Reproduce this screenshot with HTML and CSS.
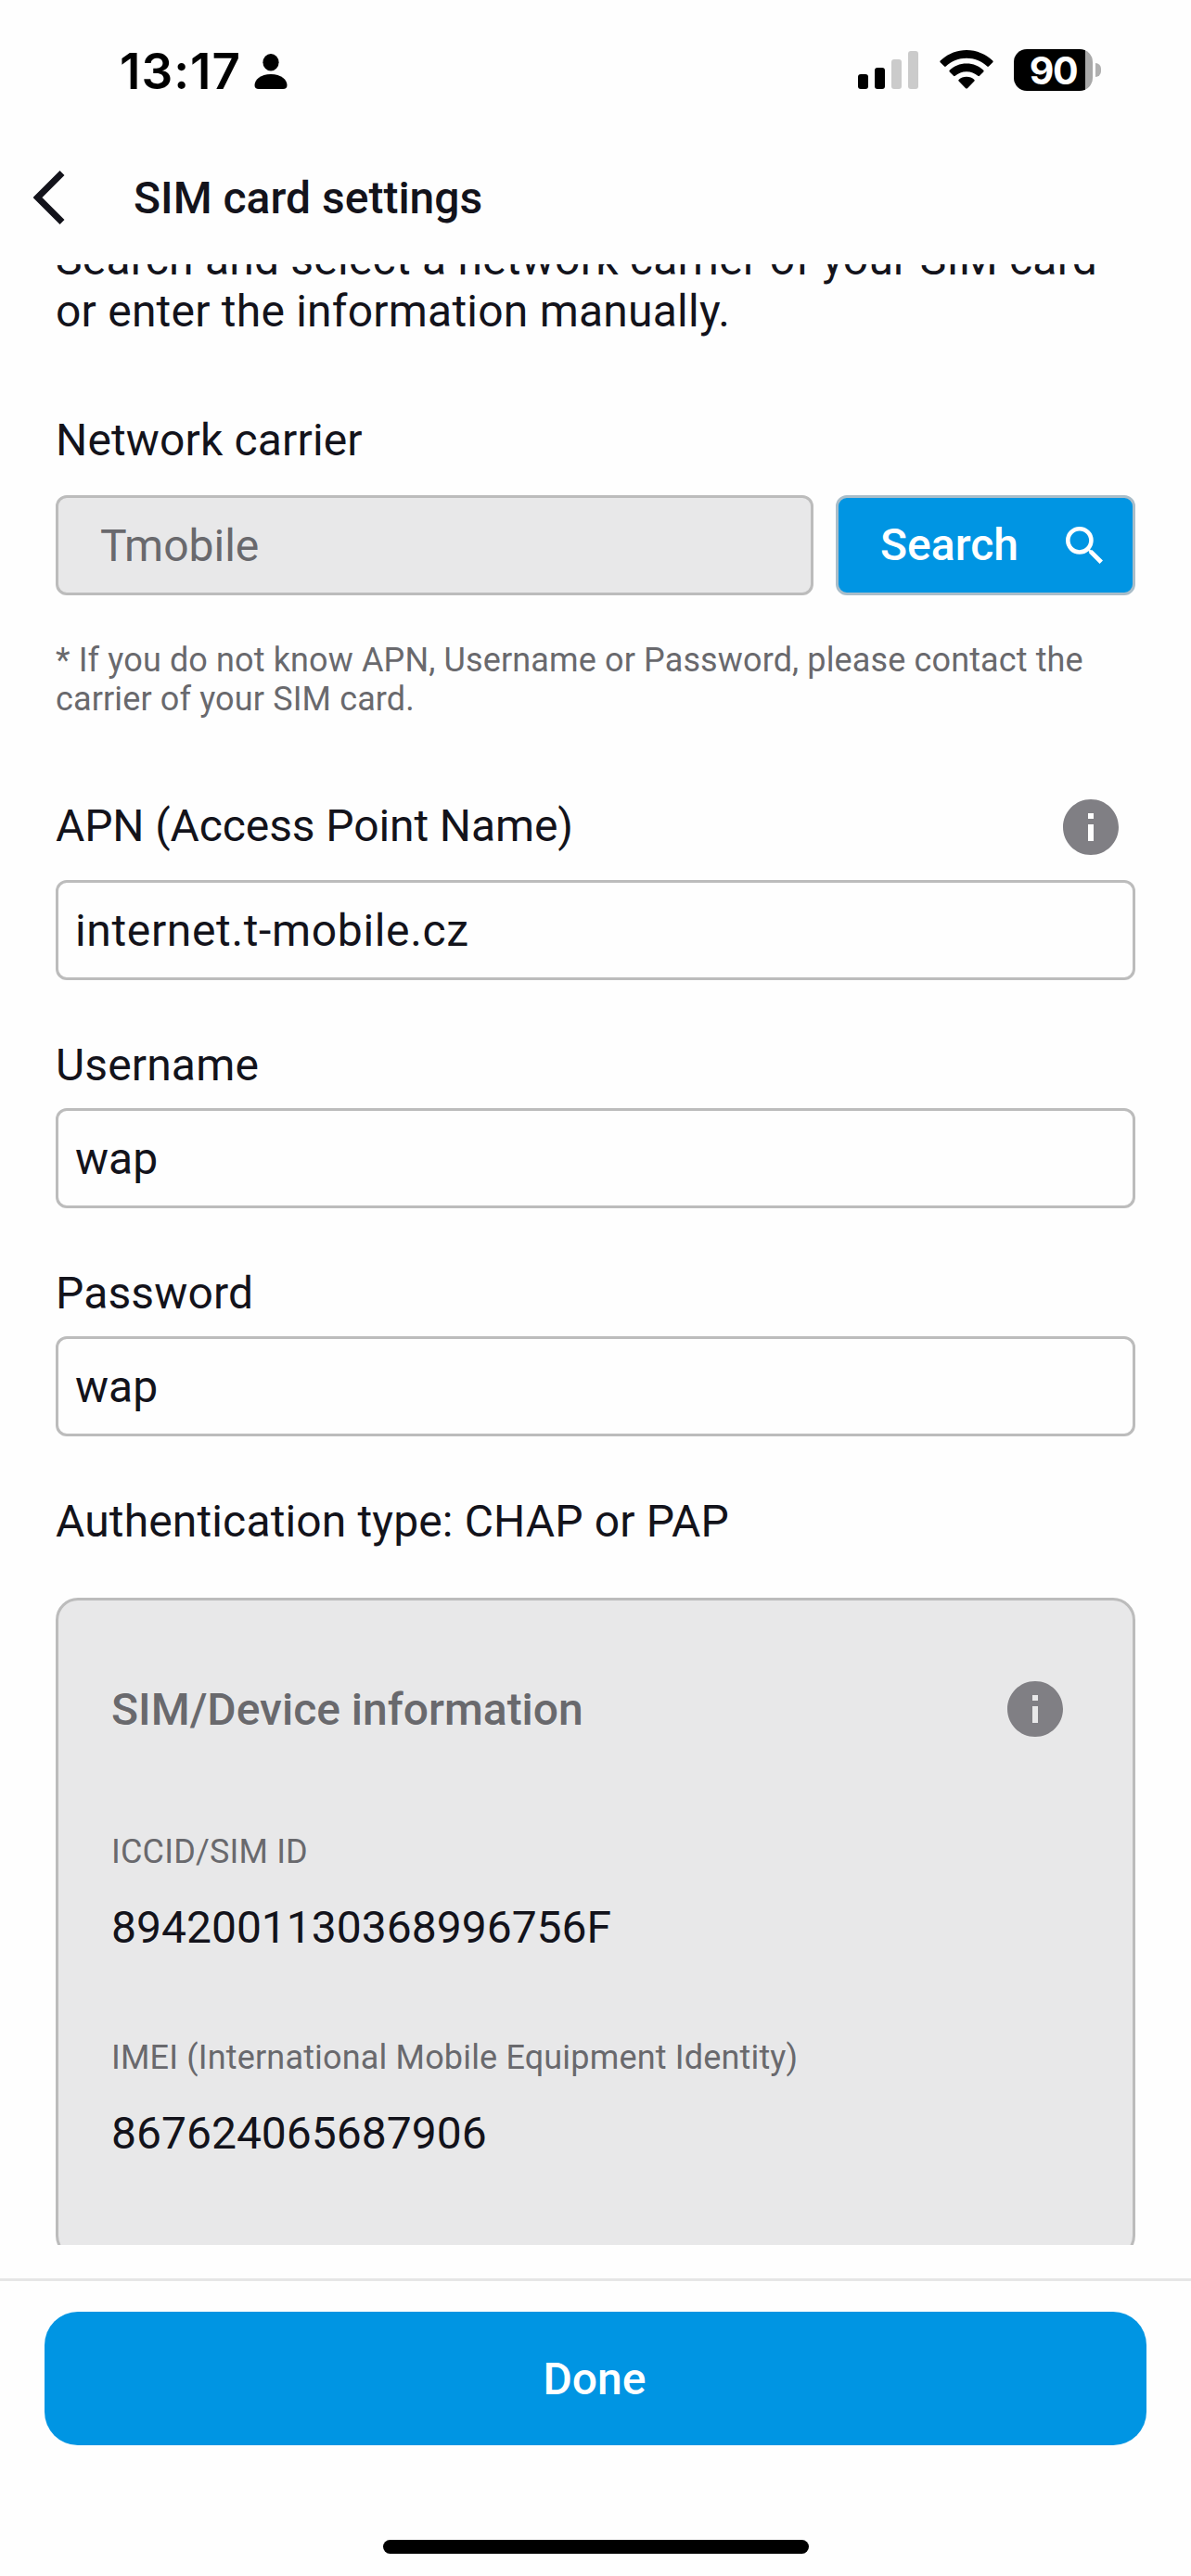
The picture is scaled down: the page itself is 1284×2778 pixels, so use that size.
FILE: index.html
```html
<!DOCTYPE html>
<html lang="en">

<head>
    <meta charset="UTF-8">
    <meta name="viewport" content="width=device-width, initial-scale=1.0">
    <title>SIM card settings</title>
    <link rel="stylesheet" href="styles.css">
</head>

<body>
    <div class="screen">
        <div class="status-bar">
            <div class="status-left">
                <span class="clock">13:17</span>
                <svg class="person-icon" viewBox="0 0 36 38">
                    <ellipse cx="18" cy="9.2" rx="8.6" ry="9.2"/>
                    <path d="M5 38C2 38 .5 36.500 .5 34C.5 28 7 22 18 22S35.500 28 35.500 34C35.500 36.500 34 38 31 38Z"/>
                </svg>
            </div>
            <div class="status-right">
                <svg class="signal-icon" viewBox="0 0 65 41">
                    <rect x="0" y="25" width="11" height="16" rx="3"/>
                    <rect x="18" y="18" width="11" height="23" rx="3"/>
                    <rect class="dim" x="36" y="9" width="11" height="32" rx="3"/>
                    <rect class="dim" x="54" y="0" width="11" height="41" rx="3"/>
                </svg>
                <svg class="wifi-icon" viewBox="0 0 58 42">
                    <path d="M29 0C40 0 50 4.500 57.300 11.600Q58 12.500 57.300 13.300L53 17.600Q52 18.300 51.200 17.600C45.300 12 37.500 8.800 29 8.800S12.700 12 6.800 17.600Q6 18.300 5 17.600L.7 13.300Q0 12.500 .7 11.600C8 4.500 18 0 29 0Z"/>
                    <path d="M29 14.500C36.200 14.500 42.700 17.200 47.300 21.800Q48 22.600 47.300 23.500L43 27.800Q42.200 28.600 41.200 27.800C38 24.900 33.700 23.200 29 23.200S20 24.900 16.800 27.800Q15.800 28.600 15 27.800L10.700 23.500Q10 22.600 10.700 21.800C15.300 17.200 21.800 14.500 29 14.500Z"/>
                    <path d="M29 28.800C32.300 28.800 35.200 29.900 37.400 31.900Q38.200 32.700 37.400 33.500L29.900 41.200Q29 42 28.100 41.200L20.600 33.500Q19.800 32.700 20.600 31.900C22.800 29.900 25.700 28.800 29 28.800Z"/>
                </svg>
                <div class="battery">
                    <div class="battery-body">90</div>
                    <div class="battery-tip"></div>
                </div>
            </div>
        </div>

        <header class="header">
            <svg class="back-icon" viewBox="0 0 34 58">
                <path d="M31 2.500L4.500 29L31 55.500"/>
            </svg>
            <h1>SIM card settings</h1>
        </header>

        <main class="content">
            <p class="intro">Search and select a network carrier of your SIM card<br>or enter the information manually.</p>

            <label class="label carrier-label" for="carrier">Network carrier</label>
            <div class="carrier-row">
                <input class="input carrier-input" type="text" id="carrier" value="Tmobile" disabled>
                <button class="search-button">
                    <span>Search</span>
                    <svg class="search-icon" viewBox="3 3 17.490 17.490">
                        <path d="M15.500 14h-.79l-.28-.27A6.471 6.471 0 0 0 16 9.500 6.500 6.500 0 1 0 9.500 16c1.610 0 3.090-.59 4.230-1.570l.27.28v.79l5 4.990L20.490 19l-4.990-5zm-6 0C7.010 14 5 11.990 5 9.500S7.010 5 9.500 5 14 7.010 14 9.500 11.990 14 9.500 14z"/>
                    </svg>
                </button>
            </div>
            <p class="note">* If you do not know APN, Username or Password, please contact the<br>carrier of your SIM card.</p>

            <div class="apn-row">
                <label class="label" for="apn">APN (Access Point Name)</label>
                <svg class="info-icon" viewBox="2 2 20 20">
                    <path d="M12 2C6.480 2 2 6.480 2 12s4.480 10 10 10 10-4.480 10-10S17.520 2 12 2zm1 15h-2v-6h2v6zm0-8h-2V7h2v2z"/>
                </svg>
            </div>
            <input class="input apn-input" type="text" id="apn" value="internet.t-mobile.cz">

            <label class="label field-label" for="username">Username</label>
            <input class="input" type="text" id="username" value="wap">

            <label class="label field-label" for="password">Password</label>
            <input class="input" type="text" id="password" value="wap">

            <p class="auth">Authentication type: CHAP or PAP</p>

            <section class="card">
                <div class="card-head">
                    <h2>SIM/Device information</h2>
                    <svg class="info-icon" viewBox="2 2 20 20">
                        <path d="M12 2C6.480 2 2 6.480 2 12s4.480 10 10 10 10-4.480 10-10S17.520 2 12 2zm1 15h-2v-6h2v6zm0-8h-2V7h2v2z"/>
                    </svg>
                </div>
                <dl class="info-list">
                    <dt>ICCID/SIM ID</dt>
                    <dd>8942001130368996756F</dd>
                    <dt>IMEI (International Mobile Equipment Identity)</dt>
                    <dd>867624065687906</dd>
                </dl>
            </section>
        </main>

        <footer class="footer">
            <button class="done-button">Done</button>
            <div class="home-indicator"></div>
        </footer>
    </div>
</body>

</html>
```
FILE: styles.css
```css
* {
    box-sizing: border-box;
    margin: 0;
    padding: 0;
}

body {
    font-family: Roboto, "Liberation Sans", sans-serif;
    font-size: 48px;
    line-height: 56px;
    color: #13131b;
    background: #fefefe;
}

svg {
    display: block;
    flex-shrink: 0;
}

.screen {
    display: flex;
    flex-direction: column;
    width: 1284px;
    height: 2778px;
    overflow: hidden;
}

/* status bar */
.status-bar {
    display: flex;
    justify-content: space-between;
    height: 141px;
    padding: 53px 97px 0 129px;
    font-family: Inter, "Liberation Sans", sans-serif;
    color: #000;
}

.status-left {
    display: flex;
    gap: 15px;
}

.clock {
    width: 130px;
    font-size: 53px;
    font-weight: 600;
    line-height: 48px;
    letter-spacing: 1px;
    white-space: nowrap;
}

.person-icon {
    width: 36px;
    height: 38px;
    margin-top: 5px;
}

.status-right {
    display: flex;
    align-items: flex-start;
}

.signal-icon {
    width: 65px;
    height: 41px;
    margin-top: 2px;
}

.signal-icon .dim {
    fill: #cbcbcb;
}

.wifi-icon {
    width: 58px;
    height: 42px;
    margin: 1px 22px 0 23px;
}

.battery {
    display: flex;
    align-items: center;
    gap: 3px;
}

.battery-body {
    width: 85px;
    height: 45px;
    border-radius: 14px;
    background: linear-gradient(to right, #000 77px, #a8a8a8 77px);
    color: #fff;
    font-size: 41px;
    font-weight: 700;
    line-height: 46px;
    letter-spacing: -1.5px;
    text-align: center;
}

.battery-tip {
    width: 6px;
    height: 15px;
    border-radius: 0 6px 6px 0;
    background: #b0b0b0;
}

/* header */
.header {
    display: flex;
    align-items: center;
    gap: 74px;
    height: 144px;
    padding: 0 36px;
}

.back-icon {
    width: 34px;
    height: 58px;
    fill: none;
    stroke: #13131b;
    stroke-width: 7;
}

.header h1 {
    padding-top: 2px;
    font-size: 48px;
    font-weight: 500;
}

/* scrolling form */
.content {
    height: 2136px;
    padding: 0 60px;
    overflow: hidden;
}

.intro {
    margin-top: -33px;
    letter-spacing: 0.22px;
    white-space: nowrap;
}

.label {
    display: block;
    letter-spacing: 0.15px;
}

.carrier-label {
    margin: 83px 0 31px;
}

.input {
    display: block;
    width: 100%;
    height: 108px;
    padding: 0 18px;
    border: 3px solid #bcbcbc;
    border-radius: 12px;
    background: #fefefe;
    color: #13131b;
    font: inherit;
}

.carrier-row {
    display: flex;
    gap: 24px;
}

.carrier-input {
    width: 817px;
    padding: 0 45px;
    background: #e8e8e9;
    color: #69696d;
}

.search-button {
    display: flex;
    flex: 1;
    align-items: center;
    justify-content: space-between;
    height: 108px;
    padding: 0 32px 0 45px;
    border: 3px solid #a9bdc9;
    border-radius: 12px;
    background: #0095e3;
    color: #fff;
    font: inherit;
    font-weight: 500;
}

.search-icon {
    width: 40px;
    height: 40px;
    fill: #fff;
}

.note {
    margin-top: 49px;
    color: #69696d;
    font-size: 36px;
    line-height: 42px;
    letter-spacing: 0.13px;
    white-space: nowrap;
}

.apn-row {
    display: flex;
    justify-content: space-between;
    height: 60px;
    margin-top: 87px;
    padding-right: 18px;
}

.apn-row .label {
    margin-top: 1px;
    letter-spacing: -0.11px;
}

.info-icon {
    width: 60px;
    height: 60px;
    fill: #807f84;
}

.apn-input {
    margin-top: 27px;
    letter-spacing: 0.65px;
}

.field-label {
    margin: 64px 0 18px;
}

.auth {
    margin: 64px 0 54px;
    letter-spacing: 0.14px;
}

/* device information */
.card {
    height: 712px;
    padding: 87px 75px 0 57px;
    border: 3px solid #bcbcbc;
    border-radius: 24px;
    background: #e8e8e9;
}

.card-head {
    display: flex;
    justify-content: space-between;
    height: 60px;
    margin-bottom: 103px;
}

.card-head h2 {
    margin-top: 3px;
    color: #69696d;
    font-size: 48px;
    font-weight: 500;
}

.info-list dt {
    margin-bottom: 33px;
    color: #69696d;
    font-size: 36px;
    line-height: 42px;
    letter-spacing: 0.17px;
}

.info-list dd {
    margin-bottom: 91px;
}

/* bottom */
.footer {
    display: flex;
    flex-direction: column;
    align-items: center;
    margin-top: 36px;
    padding: 33px 48px 0;
    border-top: 3px solid #e6e6e6;
}

.done-button {
    width: 100%;
    height: 144px;
    padding: 1px 2px 0 0;
    border: none;
    border-radius: 36px;
    background: #0095e3;
    color: #fff;
    font: inherit;
    font-weight: 500;
}

.home-indicator {
    width: 459px;
    height: 15px;
    margin-top: 102px;
    border-radius: 8px;
    background: #000;
}
```
